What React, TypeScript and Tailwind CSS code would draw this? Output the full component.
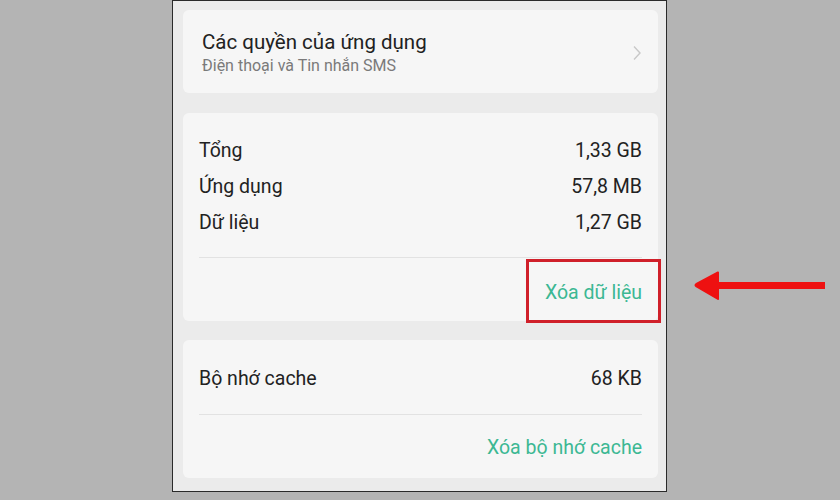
import React from "react";

const rows = [
  { label: "Tổng", value: "1,33 GB" },
  { label: "Ứng dụng", value: "57,8 MB" },
  { label: "Dữ liệu", value: "1,27 GB" },
];

function Card({ children, className = "" }: { children: React.ReactNode; className?: string }) {
  return <div className={`rounded-[6px] bg-[#f6f6f6] ${className}`}>{children}</div>;
}

export default function App() {
  return (
    <div className="flex h-[500px] w-[840px] bg-[#b4b4b4] font-['Roboto',sans-serif]">
      <div className="ml-[172px] flex h-[492px] w-[495px] flex-col overflow-hidden border border-[#2a2a2a] bg-[#ebebeb] pl-[10px] pr-[8px] pt-[9px]">
        <Card className="flex h-[83px] items-center pl-[19px] pr-[16px]">
          <div className="flex-1">
            <div className="text-[20.5px] leading-[26px] text-[#222]">Các quyền của ứng dụng</div>
            <div className="mt-[1px] text-[16px] leading-[19px] text-[#7a7a7a]">Điện thoại và Tin nhắn SMS</div>
          </div>
          <svg width="10" height="16" viewBox="0 0 10 16" className="mt-[2px]">
            <path d="M2 1.5 L8 8 L2 14.5" fill="none" stroke="#c8c8c8" strokeWidth="1.4" />
          </svg>
        </Card>

        <Card className="mt-[20px] h-[208px] px-[16px] pt-[20px]">
          {rows.map((r) => (
            <div key={r.label} className="flex h-[36px] items-center justify-between text-[19.5px] text-[#222]">
              <span>{r.label}</span>
              <span>{r.value}</span>
            </div>
          ))}
          <div className="mt-[16px] border-t border-[#e2e2e2]" />
          <div className="relative flex h-[63px] items-center justify-end pt-[6px]">
            <span className="text-[19.5px] text-[#3cb893]">Xóa dữ liệu</span>
            <div className="absolute right-[-19px] top-[1px] h-[64px] w-[135px] border-[3px] border-[#d0202a]" />
          </div>
        </Card>

        <Card className="mt-[19px] h-[138px] px-[16px] pt-[21px]">
          <div className="flex h-[36px] items-center justify-between text-[19.5px] text-[#222]">
            <span>Bộ nhớ cache</span>
            <span>68 KB</span>
          </div>
          <div className="mt-[17px] border-t border-[#e2e2e2]" />
          <div className="flex h-[66px] items-center justify-end">
            <span className="text-[19.5px] text-[#3cb893]">Xóa bộ nhớ cache</span>
          </div>
        </Card>
      </div>

      <svg width="134" height="30" viewBox="0 0 134 30" className="ml-[27px] mt-[271px]">
        <path d="M24 1.5 L2.5 13 Q0.5 14 2.5 15.5 L24 28 Z" fill="#ee1111" stroke="#ee1111" strokeWidth="2" strokeLinejoin="round" />
        <rect x="20" y="11" width="111" height="7" fill="#ee1111" />
      </svg>
    </div>
  );
}
